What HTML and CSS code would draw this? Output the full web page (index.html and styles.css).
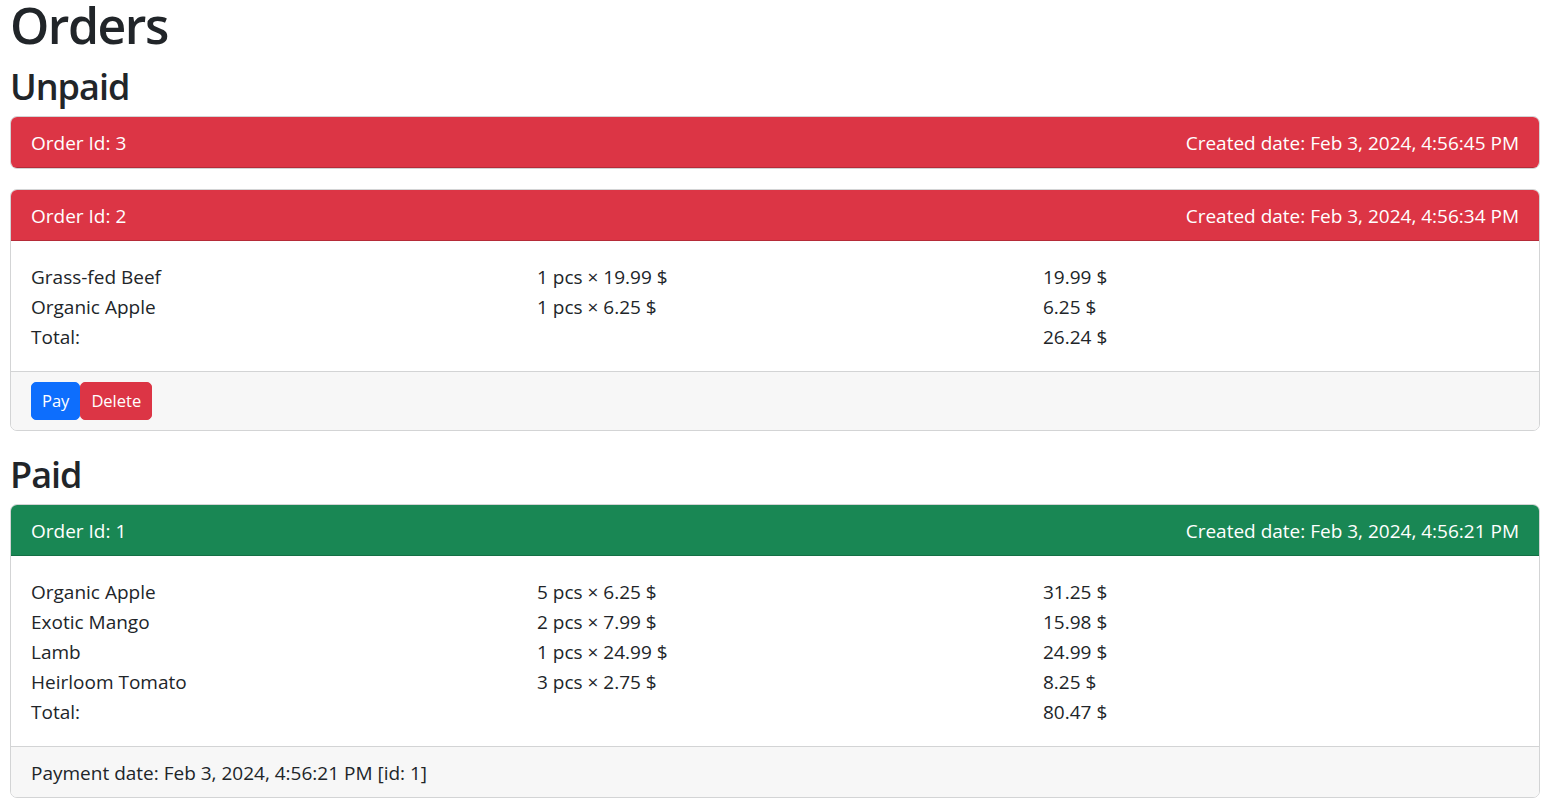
FILE: index.html
```html
<!DOCTYPE html>
<html lang="en">
<head>
<meta charset="utf-8">
<title>Orders</title>
<link rel="stylesheet" href="styles.css">
</head>
<body>
<main class="page">
  <h1 class="title">Orders</h1>

  <h2 class="section">Unpaid</h2>

  <div class="card">
    <div class="card-header danger">
      <span>Order Id: 3</span>
      <span>Created date: Feb 3, 2024, 4:56:45 PM</span>
    </div>
  </div>

  <div class="card">
    <div class="card-header danger">
      <span>Order Id: 2</span>
      <span>Created date: Feb 3, 2024, 4:56:34 PM</span>
    </div>
    <div class="card-body">
      <div class="row"><div class="col">Grass-fed Beef</div><div class="col">1 pcs × 19.99 $</div><div class="col">19.99 $</div></div>
      <div class="row"><div class="col">Organic Apple</div><div class="col">1 pcs × 6.25 $</div><div class="col">6.25 $</div></div>
      <div class="row"><div class="col">Total:</div><div class="col"></div><div class="col">26.24 $</div></div>
    </div>
    <div class="card-footer">
      <button class="btn btn-primary">Pay</button><button class="btn btn-danger">Delete</button>
    </div>
  </div>

  <h2 class="section">Paid</h2>

  <div class="card">
    <div class="card-header success">
      <span>Order Id: 1</span>
      <span>Created date: Feb 3, 2024, 4:56:21 PM</span>
    </div>
    <div class="card-body">
      <div class="row"><div class="col">Organic Apple</div><div class="col">5 pcs × 6.25 $</div><div class="col">31.25 $</div></div>
      <div class="row"><div class="col">Exotic Mango</div><div class="col">2 pcs × 7.99 $</div><div class="col">15.98 $</div></div>
      <div class="row"><div class="col">Lamb</div><div class="col">1 pcs × 24.99 $</div><div class="col">24.99 $</div></div>
      <div class="row"><div class="col">Heirloom Tomato</div><div class="col">3 pcs × 2.75 $</div><div class="col">8.25 $</div></div>
      <div class="row"><div class="col">Total:</div><div class="col"></div><div class="col">80.47 $</div></div>
    </div>
    <div class="card-footer text-footer">
      Payment date: Feb 3, 2024, 4:56:21 PM [id: 1]
    </div>
  </div>
</main>
</body>
</html>
```

FILE: styles.css
```css
* { box-sizing: border-box; }

html, body {
  margin: 0;
  padding: 0;
  background: #fff;
}

body {
  font-family: "Open Sans", "Noto Sans", sans-serif;
  font-size: 19px;
  line-height: 30px;
  color: #212529;
}

.page {
  padding: 0 13px 20px 10px;
}

.title {
  margin: 0 0 12px;
  font-size: 50px;
  line-height: 51px;
  font-weight: 600;
  letter-spacing: -1.5px;
}

.section {
  margin: 0 0 5px;
  font-size: 36px;
  line-height: 47px;
  font-weight: 600;
  letter-spacing: -1px;
  padding-bottom: 1px;
}

.card {
  border: 1px solid #d3d4d5;
  border-radius: 7px;
  margin-bottom: 20px;
  overflow: hidden;
  background: #fff;
}

.card-header {
  display: flex;
  justify-content: space-between;
  padding: 11px 20px 9px;
  color: #fff;
  border-bottom: 1px solid rgba(0, 0, 0, 0.175);
}

.card-header.danger { background: #dc3545; }
.card-header.success { background: #198754; }

.card-body {
  padding: 21px 20px 19px;
}

.row {
  display: grid;
  grid-template-columns: repeat(3, 1fr);
  column-gap: 30px;
}

.card-footer {
  padding: 10px 20px;
  background: #f7f7f7;
  border-top: 1px solid #d3d4d5;
}

.text-footer {
  padding: 11px 20px 9px;
}

.btn {
  font-family: inherit;
  font-size: 16.5px;
  line-height: 26px;
  padding: 5px 10px;
  border: 1px solid transparent;
  border-radius: 5px;
  color: #fff;
  vertical-align: top;
  cursor: pointer;
}

.btn-primary { background: #0d6efd; border-color: #0d6efd; }
.btn-danger { background: #dc3545; border-color: #dc3545; }
```
